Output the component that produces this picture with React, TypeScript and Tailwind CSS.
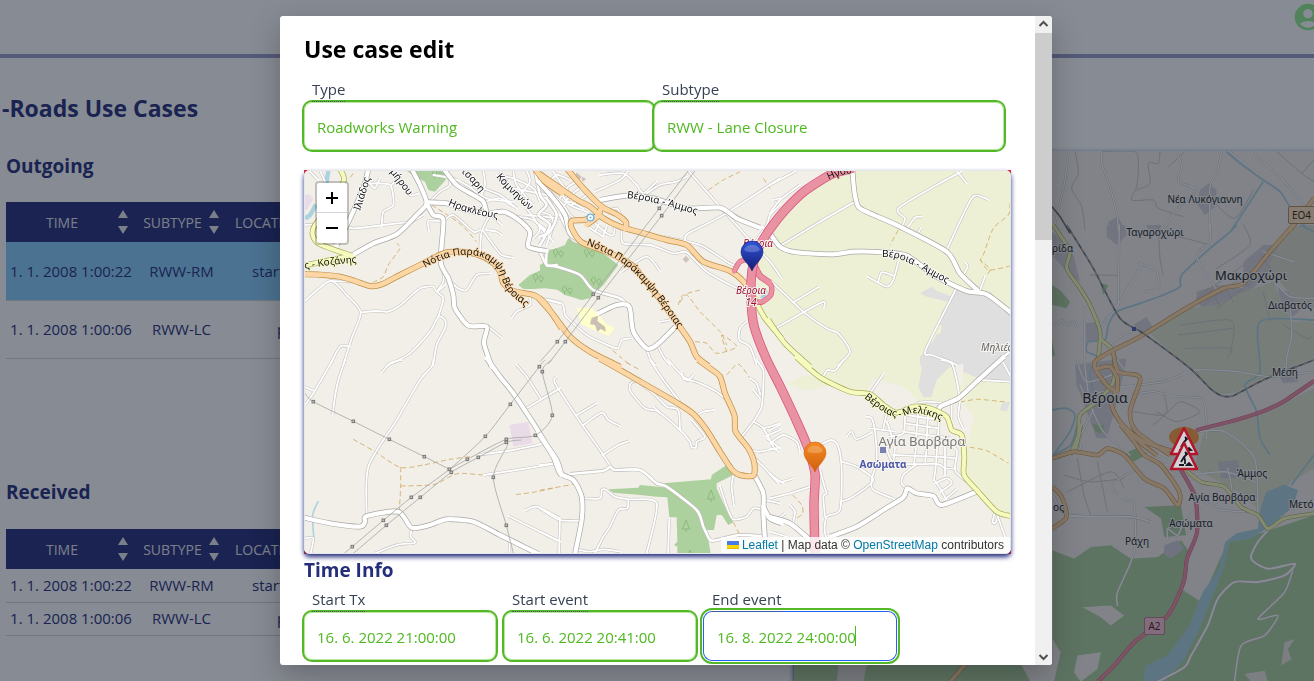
import React from "react";
import { MdAccountCircle } from "react-icons/md";

/* ---------- map drawing ---------- */

type Tile = "P" | "A" | "B" | "C" | "D" | "E" | "F" | "G" | "H" | "I";
type Kind =
  | "minor"
  | "street"
  | "tertiary"
  | "secondary"
  | "primary"
  | "ramp"
  | "motorway"
  | "thin";
type Line = [Tile, Kind, string];
type Area = [Tile, string, string];

const tileTransform: Record<Tile, string> = {
  P: "translate(0 0)",
  A: "translate(300 165) scale(0.33333)",
  B: "translate(540 165) scale(0.33333)",
  C: "translate(770 165) scale(0.33333)",
  D: "translate(300 360) scale(0.33333)",
  E: "translate(540 360) scale(0.33333)",
  F: "translate(770 360) scale(0.33333)",
  G: "translate(1030 0) scale(0.33333)",
  H: "translate(1030 225) scale(0.33333)",
  I: "translate(790 425) scale(0.33419)",
};

const kinds: Record<Kind, { casing: string; fill: string; outer: number; inner: number }> = {
  thin: { casing: "#c4c2c0", fill: "#c4c2c0", outer: 0.9, inner: 0.5 },
  minor: { casing: "#c6c4c2", fill: "#ffffff", outer: 3, inner: 1.8 },
  street: { casing: "#bdbbb9", fill: "#ffffff", outer: 3.8, inner: 2.6 },
  tertiary: { casing: "#a9a8a6", fill: "#ffffff", outer: 5.6, inner: 4.2 },
  secondary: { casing: "#a3ab50", fill: "#f7fabf", outer: 5.6, inner: 4.2 },
  primary: { casing: "#bf8f45", fill: "#fcd6a4", outer: 6, inner: 4.6 },
  ramp: { casing: "#dc5480", fill: "#e892a2", outer: 5.4, inner: 4.2 },
  motorway: { casing: "#dc5480", fill: "#e892a2", outer: 9.4, inner: 7.8 },
};

const order: Kind[] = ["thin", "minor", "street", "tertiary", "secondary", "primary", "ramp", "motorway"];

function smooth(points: string): string {
  const p = points
    .trim()
    .split(/\s+/)
    .map((s) => s.split(",").map(Number));
  let d = `M${p[0][0]} ${p[0][1]}`;
  for (let i = 0; i < p.length - 1; i++) {
    const a = p[Math.max(i - 1, 0)];
    const b = p[i];
    const c = p[i + 1];
    const e = p[Math.min(i + 2, p.length - 1)];
    const k = 8;
    d += `C${b[0] + (c[0] - a[0]) / k} ${b[1] + (c[1] - a[1]) / k} ${c[0] - (e[0] - b[0]) / k} ${
      c[1] - (e[1] - b[1]) / k
    } ${c[0]} ${c[1]}`;
  }
  return d;
}

function Areas({ items }: { items: Area[] }) {
  return (
    <g>
      {items.map(([t, color, pts], i) => (
        <polygon key={i} transform={tileTransform[t]} fill={color} points={pts} />
      ))}
    </g>
  );
}

function Roads({ items, scale = 1 }: { items: Line[]; scale?: number }) {
  const pass = (kind: Kind, casing: boolean) =>
    items
      .filter((l) => l[1] === kind)
      .map(([t, k, pts], i) => (
        <path
          key={kind + casing + i}
          d={smooth(pts)}
          transform={tileTransform[t]}
          fill="none"
          stroke={casing ? kinds[k].casing : kinds[k].fill}
          strokeWidth={(casing ? kinds[k].outer : kinds[k].inner) * scale}
          strokeLinecap={casing ? "butt" : "round"}
          strokeLinejoin="round"
          vectorEffect="non-scaling-stroke"
        />
      ));
  return (
    <g>
      {order.map((k) => (
        <g key={k}>
          {pass(k, true)}
          {pass(k, false)}
        </g>
      ))}
    </g>
  );
}

function Strokes({
  items,
  color,
  width,
  dash,
}: {
  items: [Tile, string][];
  color: string;
  width: number;
  dash?: string;
}) {
  return (
    <g fill="none" stroke={color} strokeWidth={width} strokeDasharray={dash} strokeLinejoin="round">
      {items.map(([t, pts], i) => (
        <path key={i} d={smooth(pts)} transform={tileTransform[t]} vectorEffect="non-scaling-stroke" />
      ))}
    </g>
  );
}

const WOOD = "#add19e";
const FARM = "#eef0d5";
const TOWN = "#e0dfdf";
const WATER = "#aad3df";

const areas: Area[] = [
  ["B", FARM, "655,300 685,190 720,150 720,520 650,430"],
  ["C", FARM, "0,215 80,95 165,17 720,17 720,600 130,600 75,545 0,450"],
  ["F", FARM, "75,-20 720,-20 720,465 680,450 620,390 585,340 590,250 605,170 575,125 440,128 400,110 290,95 250,90 200,70 150,60"],
  ["F", FARM, "50,70 110,45 190,75 110,92"],
  ["F", "#f2efe9", "290,95 310,55 400,80 450,128 575,125 612,170 590,260 588,345 400,330 300,110"],
  ["C", TOWN, "515,440 560,370 620,385 660,380 720,445 720,600 450,600 450,575 465,560 495,520"],
  ["C", TOWN, "450,385 485,365 500,378 560,400 540,412 500,402 470,395"],
  ["C", FARM, "500,480 515,480 512,505 495,510"],
  ["C", FARM, "545,600 560,588 590,588 605,600"],
  ["F", TOWN, "450,-10 720,-10 720,62 640,62 590,40 540,20 500,60 485,110 460,112 445,80 455,30"],
  ["F", TOWN, "695,130 720,125 710,155 690,150"],
  ["F", "#f2efe9", "550,22 580,10 578,80 560,60"],
  ["A", WOOD, "320,17 437,17 437,45 405,80 385,75 375,50 345,35"],
  ["A", WOOD, "655,360 690,330 735,310 742,255 780,250 780,375 735,370 700,372 670,372"],
  ["B", WOOD, "20,260 50,250 75,240 85,220 130,240 160,242 235,300 190,360 150,400 125,405 75,390 35,362 0,355 0,300 15,290"],
  ["E", WOOD, "205,388 295,383 300,375 370,382 370,370 513,358 515,345 560,315 580,345 530,370 530,385 550,430 580,487 565,495 545,465 530,465 522,510 500,510 512,580 412,580 412,560 402,555 412,545 410,472 388,472 382,412 350,410 300,405 220,398"],
  ["A", "#eadbe8", "15,90 28,88 40,103 20,135 15,130"],
  ["D", "#eadbe8", "628,195 685,185 697,250 640,260"],
  ["B", "#ffffcc", "110,430 155,428 200,478 225,490 205,512 150,490 125,478"],
  ["B", "#ccbfb6", "155,458 175,452 172,468 195,485 198,500 182,492 172,500 165,480 150,478"],
  ["B", "#cfc4bb", "438,272 448,283 438,294 428,283"],
  ["B", "#cfc4bb", "110,22 125,35 118,45 105,32"],
  ["B", "#cfc4bb", "128,35 138,42 130,50 124,42"],
  ["B", WATER, "660,400 672,370 684,378 675,400"],
];

const rivers: [Tile, string][] = [
  ["A", "85,17 80,55 90,70"],
  ["A", "48,118 30,150 15,160"],
];

const tracks: [Tile, string][] = [
  ["A", "160,25 145,45"],
  ["A", "218,352 250,335 265,300 300,250 290,235"],
  ["A", "395,120 450,155 490,185 530,230"],
  ["A", "455,150 530,205"],
  ["D", "160,238 225,275 300,322 370,315 450,298 510,290"],
  ["D", "302,322 302,380 298,450"],
  ["D", "302,378 400,374 450,350 480,340 550,345"],
  ["D", "648,404 710,395 770,382"],
  ["E", "0,391 50,382 100,373"],
  ["B", "505,75 550,45 600,20"],
  ["B", "670,40 690,70"],
  ["B", "480,375 430,390 415,420 440,390 480,440 540,500 560,540"],
  ["B", "465,530 500,535 530,565 590,545 545,510 560,560"],
  ["B", "200,540 240,575 270,600"],
  ["E", "560,45 595,12 630,55"],
  ["E", "260,8 300,30"],
  ["E", "580,487 600,525"],
  ["C", "385,195 360,240"],
  ["C", "720,115 715,150 670,190 640,270 632,285 660,312 650,330"],
  ["C", "630,282 655,315 720,303"],
  ["F", "570,126 620,118 670,122 715,127"],
  ["F", "600,262 650,272 715,310"],
  ["F", "68,405 95,435 98,460 80,475"],
];

const powers: [Tile, string][] = [
  ["D", "15,100 40,125 160,184 268,238 373,290 448,328 454,337"],
  ["D", "133,580 157,560 250,481 334,412 448,328 556,229 631,133 718,20 735,0"],
  ["D", "160,580 259,496 361,412 454,337 535,292 619,247 665,240"],
  ["D", "448,328 502,298 619,238 706,226 757,166 727,35 755,0"],
  ["D", "619,250 622,257 580,352 619,496 640,580"],
  ["B", "0,590 52,530 160,388 358,130 445,17"],
  ["B", "25,597 76,530 175,398 365,152 465,17"],
];

const pylons: [Tile, number, number][] = [
  ["D", 40, 125], ["D", 160, 184], ["D", 268, 238], ["D", 373, 290], ["D", 448, 328], ["D", 454, 337],
  ["D", 157, 560], ["D", 250, 481], ["D", 259, 496], ["D", 334, 412], ["D", 361, 412], ["D", 502, 298],
  ["D", 535, 292], ["D", 556, 229], ["D", 631, 133], ["D", 718, 20], ["D", 727, 35], ["D", 757, 166],
  ["D", 706, 226], ["D", 619, 238], ["D", 619, 247], ["D", 580, 352], ["D", 619, 496],
  ["B", 52, 530], ["B", 76, 530], ["B", 160, 388], ["B", 175, 398], ["B", 358, 130], ["B", 365, 152],
];

const roads: Line[] = [
  // motorway and its junction
  ["P", "motorway", "853,168 832,174 806,190 786,209 770,229 758,249 752,271 751,298 754,326 766,358 780,386 797,422 808,448 815,474 814,505 815,556"],
  ["B", "ramp", "640,412 668,410 692,390 693,360 660,335 645,310"],
  ["B", "ramp", "582,320 600,290 635,285 660,330 690,352"],
  // main roads
  ["A", "primary", "12,328 60,329 120,335 165,348 210,363 245,358 300,330 370,295 430,265 480,260 530,268 575,290 600,320 610,355 640,378 700,390 735,415 785,490"],
  ["B", "primary", "-5,398 40,450 90,515 150,560 240,605"],
  ["E", "primary", "180,-4 280,53 410,128 460,162 500,210 540,275 575,328 600,345 640,347 643,310 625,265 587,215 583,165 555,100 540,50 510,25 475,0"],
  ["B", "primary", "-5,25 50,62 110,104 150,125 190,160 240,185 300,202 380,225 440,240 490,290 570,318 615,355 645,405"],
  ["B", "primary", "80,10 130,70 185,125 230,148 258,172 256,192"],
  ["B", "primary", "185,125 172,155 140,180"],
  ["B", "primary", "172,155 130,165 95,168 95,190 125,232 200,260 275,300 310,340 350,390 410,472 450,530 470,575 505,603"],
  ["A", "primary", "705,12 735,50 785,85"],
  ["B", "secondary", "645,405 675,460 725,520"],
  ["C", "secondary", "-5,465 45,535 120,605"],
  ["F", "secondary", "80,-8 150,52 240,95 300,102 340,135 380,158 430,140 480,145 530,170 545,210 575,225 583,290 582,345 620,390 680,455 722,468"],
  ["A", "secondary", "120,12 132,45 100,110 45,180 38,210 60,238 155,272"],
  ["A", "secondary", "155,272 90,285 12,302"],
  // connecting roads
  ["A", "tertiary", "335,12 360,60 380,115 350,150 290,208 220,235 155,272"],
  ["A", "tertiary", "380,112 440,115 500,135 560,145 610,140 650,160 690,200 685,245 740,258"],
  ["A", "tertiary", "380,115 400,150 430,165 422,290 445,340 460,390 465,430 505,482 560,485 552,535 575,605"],
  ["A", "tertiary", "435,17 470,60 520,90 550,110 560,145"],
  ["A", "tertiary", "205,12 190,70 150,160 110,240"],
  ["D", "tertiary", "560,-5 600,50 640,100 700,190 740,255 770,300 785,345"],
  ["E", "tertiary", "-5,220 40,290 60,340 100,360 125,410 125,480 105,582"],
  ["D", "tertiary", "12,473 90,490 180,500 195,485 200,468 295,455 335,503 390,495 440,478 520,485 600,525 715,582"],
  ["C", "tertiary", "247,12 253,80 265,125 300,145 390,185 530,260 570,325 625,378"],
  ["C", "tertiary", "0,205 30,245 80,262 190,268 250,260 340,262 410,272 500,335 590,378 650,388 725,445"],
  ["F", "tertiary", "700,-8 620,65 565,115 510,140 510,165"],
  ["F", "tertiary", "180,530 260,500 340,450 400,412 412,385 440,400 490,408 515,435 620,395"],
  ["B", "tertiary", "180,105 262,92 340,100 440,130 540,128 590,160 660,188"],
  ["E", "tertiary", "643,345 670,400 670,460 675,540"],
  ["E", "tertiary", "670,440 690,475 725,490"],
  ["F", "tertiary", "-5,470 60,490 120,540"],
  ["B", "tertiary", "175,445 230,420 268,425 280,500 320,550 350,540 412,480"],
  ["B", "tertiary", "-5,50 40,100 75,150 90,205 130,235"],
  // streets
  ["A", "street", "740,258 740,300 770,300"],
  ["B", "street", "0,260 20,300 50,305 120,330 160,375 240,400 270,430"],
  ["B", "street", "130,235 100,225 80,190 60,150"],
  ["A", "street", "705,17 720,90 740,120 715,150 750,180 720,240"],
  ["A", "street", "740,100 770,150 750,200 720,215"],
  ["A", "minor", "15,180 100,175 160,190 250,180 330,170 370,150"],
  ["A", "minor", "210,55 270,60 280,120 250,140 245,185"],
  ["A", "minor", "210,55 225,70 240,40"],
  ["A", "minor", "275,60 300,40 330,90 355,85"],
  ["A", "minor", "60,17 75,50"],
  ["A", "minor", "30,20 55,45"],
  ["A", "minor", "12,410 90,348 140,390 182,442 155,520 130,600"],
  ["A", "minor", "90,348 150,350"],
  ["A", "minor", "182,442 230,438 265,440 305,418 335,390 365,368 400,365 410,380 435,360"],
  ["A", "minor", "430,300 430,350 412,380 430,400 415,455"],
  ["A", "minor", "265,600 330,565 390,500 415,455 435,465 435,490 410,540 400,600"],
  ["A", "minor", "445,345 475,370 500,375 530,330 570,325"],
  ["A", "minor", "690,398 690,420 650,440 635,460"],
  ["A", "minor", "722,400 780,415"],
  ["A", "minor", "565,485 605,518"],
  ["A", "minor", "150,545 120,545 90,600"],
  ["A", "minor", "430,170 385,168 388,200"],
  ["A", "minor", "430,170 460,150 520,200 540,195"],
  ["A", "minor", "540,260 545,200 570,150"],
  ["A", "minor", "548,195 580,240 605,270 638,278"],
  ["A", "minor", "560,195 590,200 605,210"],
  ["A", "minor", "570,145 605,180"],
  ["A", "minor", "400,30 460,40 500,60 560,100 640,110"],
  ["A", "minor", "440,20 450,60 420,80 390,110"],
  ["A", "minor", "500,17 530,60 600,90 650,130"],
  ["A", "minor", "540,100 555,60 550,17"],
  ["A", "minor", "560,110 600,100 640,125"],
  ["A", "minor", "590,30 640,40 700,70 720,110"],
  ["A", "minor", "640,17 650,60 700,120"],
  ["A", "minor", "680,17 690,50 660,90"],
  ["A", "minor", "600,17 620,50"],
  ["A", "minor", "640,70 740,90"],
  ["A", "minor", "680,130 720,190 700,220"],
  ["A", "minor", "620,150 700,165 740,210"],
  ["A", "minor", "720,70 780,110"],
  ["A", "minor", "680,150 780,160"],
  ["A", "minor", "720,180 760,230"],
  // town blocks
  ["B", "minor", "0,90 30,110 50,150"],
  ["B", "minor", "40,20 60,50 90,85 150,130"],
  ["B", "minor", "20,60 50,30 90,45"],
  ["B", "minor", "60,100 85,65 110,50"],
  ["B", "minor", "75,110 105,80 130,65"],
  ["B", "minor", "95,120 150,85"],
  ["B", "minor", "35,60 60,80 90,120 140,140"],
  ["B", "minor", "30,80 70,120 90,150 110,165"],
  ["B", "minor", "60,140 85,110 130,130"],
  ["B", "minor", "0,140 30,150 40,180 20,240"],
  ["B", "minor", "0,180 20,200 0,240"],
  ["B", "minor", "160,170 200,205 220,210 225,180"],
  ["B", "minor", "150,190 190,215"],
  ["B", "minor", "175,180 165,200"],
  ["B", "minor", "200,185 190,210"],
  ["B", "minor", "210,135 230,130 240,145"],
  ["B", "minor", "0,17 30,50"],
  ["B", "minor", "165,80 240,45 265,17"],
  ["B", "minor", "180,30 250,25 290,60 310,85 350,50"],
  ["B", "minor", "245,195 250,235 330,240 400,265 440,262 500,320 600,375"],
  ["B", "minor", "320,85 360,60 410,50 440,35"],
  ["B", "minor", "445,17 540,125 620,215 690,290 725,340"],
  ["B", "minor", "435,225 445,205 550,150 720,40"],
  ["B", "minor", "370,215 480,240 560,290 590,305"],
  ["B", "minor", "550,130 600,160"],
  ["B", "minor", "640,240 680,180 690,150 720,120"],
  ["B", "street", "670,188 720,250"],
  ["B", "minor", "245,320 320,275 360,318"],
  ["B", "minor", "360,470 390,465 405,450"],
  ["B", "minor", "0,400 65,415 75,450 100,475 140,510 180,530 232,550 245,525 275,520"],
  ["B", "minor", "320,552 330,580 345,600"],
  ["B", "minor", "355,545 370,575 390,600"],
  ["B", "minor", "620,470 600,490 598,525 630,545 650,600"],
  ["E", "minor", "45,70 42,58 50,50"],
  ["E", "minor", "45,70 110,170 190,285 215,325"],
  ["E", "minor", "0,120 60,85"],
  ["E", "minor", "110,165 170,130"],
  ["E", "minor", "130,195 185,158 205,180 240,198"],
  ["E", "minor", "188,285 235,255 268,243"],
  ["E", "street", "90,342 190,332 210,320 225,330 300,330 350,370 380,380 470,450 490,500 510,540 530,540 600,525 675,530"],
  ["E", "minor", "330,0 370,60 420,125"],
  ["E", "minor", "385,0 430,50 480,70 530,95 560,120"],
  ["E", "minor", "425,35 430,55 445,60 462,42"],
  ["E", "minor", "290,62 272,70 272,95 315,145 355,155 420,210 450,245 455,262 468,262 470,245 495,230 455,180"],
  ["E", "minor", "290,62 340,100 380,140 415,150 420,210"],
  ["E", "minor", "470,165 490,155 522,150"],
  ["E", "minor", "340,140 360,158"],
  ["E", "minor", "650,0 670,30 670,70 665,140 640,185 605,230"],
  ["E", "minor", "640,90 660,115"],
  ["E", "minor", "630,55 650,70 660,100"],
  ["E", "minor", "640,185 670,205 700,260 715,275"],
  ["E", "minor", "670,205 690,200 720,190"],
  ["E", "minor", "675,230 720,210"],
  ["E", "minor", "680,235 720,265"],
  ["E", "minor", "635,272 660,275 720,262"],
  ["E", "minor", "645,295 670,320 715,370"],
  ["E", "minor", "580,345 575,380 582,435"],
  ["E", "minor", "540,378 560,440 580,478 620,470 640,445 670,450"],
  ["E", "minor", "125,415 180,415 185,390 200,390 225,410 265,418 350,430 320,580"],
  ["E", "minor", "265,420 262,445 235,450 210,500 190,530 165,580"],
  ["E", "minor", "0,445 60,480 120,482"],
  ["E", "minor", "60,480 57,582"],
  ["E", "minor", "0,515 60,545"],
  ["E", "minor", "110,568 150,575 190,568 240,575"],
  ["E", "minor", "388,475 384,582"],
  ["E", "minor", "0,315 50,310"],
  ["E", "minor", "0,252 12,250"],
  ["E", "minor", "675,420 720,430"],
  ["D", "minor", "98,0 40,100 15,135"],
  ["D", "minor", "12,80 40,92"],
  ["D", "minor", "135,0 115,60 105,110 98,165"],
  ["D", "minor", "305,0 270,10 245,38"],
  ["D", "minor", "400,0 395,20 360,60 290,180 205,320 200,468"],
  ["D", "minor", "650,15 680,50 722,115"],
  ["D", "minor", "675,148 780,85"],
  ["D", "minor", "535,285 640,270 730,252"],
  ["D", "minor", "552,345 650,330 770,310"],
  ["D", "minor", "675,452 710,440 780,475"],
  ["D", "minor", "625,468 780,545"],
  ["D", "minor", "335,505 332,530 345,548 290,555 225,580"],
  ["D", "minor", "15,535 40,535 32,580"],
  ["D", "minor", "630,545 628,580"],
  // farmland side
  ["C", "minor", "0,60 80,17"],
  ["C", "minor", "0,145 30,105 90,60"],
  ["C", "minor", "10,105 30,100"],
  ["C", "minor", "255,110 150,170 35,240"],
  ["C", "minor", "580,17 500,60 385,130 405,160 398,180"],
  ["C", "minor", "560,17 590,55"],
  ["C", "minor", "455,155 435,158 412,188"],
  ["C", "minor", "452,190 442,208"],
  ["C", "minor", "530,255 605,100 640,98 655,105"],
  ["C", "minor", "580,330 593,305 585,292"],
  ["C", "minor", "630,375 645,335"],
  ["C", "minor", "385,290 370,345 350,365 292,335"],
  ["C", "minor", "325,350 335,322 370,332"],
  ["C", "minor", "0,345 100,440 170,490 205,505 240,560 205,600"],
  ["C", "minor", "70,412 145,367"],
  ["C", "minor", "20,488 155,412 162,428"],
  ["C", "minor", "558,372 467,555 485,570 540,590 560,600"],
  ["C", "street", "670,600 720,560"],
  ["F", "minor", "160,50 172,30 195,32 220,0"],
  ["F", "minor", "300,100 340,42"],
  ["F", "minor", "515,0 545,10 560,60 570,120"],
  ["F", "minor", "630,60 720,65"],
  ["F", "minor", "695,0 720,45"],
  ["F", "minor", "570,125 565,170 580,205"],
  ["F", "minor", "545,135 545,180"],
  ["F", "minor", "440,130 470,125 510,128"],
  ["F", "minor", "405,170 400,220 355,230"],
  ["F", "minor", "445,150 438,235"],
  ["F", "minor", "475,150 470,235"],
  ["F", "minor", "508,165 498,310 492,360"],
  ["F", "minor", "410,165 510,180"],
  ["F", "minor", "405,190 505,205"],
  ["F", "minor", "400,215 540,235"],
  ["F", "minor", "375,265 370,310"],
  ["F", "minor", "438,265 432,310"],
  ["F", "minor", "470,265 465,305"],
  ["F", "minor", "370,285 500,290 560,295"],
  ["F", "minor", "350,265 375,310 500,312 525,325 555,325"],
  ["F", "minor", "510,240 560,270 555,330 590,365"],
  ["F", "minor", "525,260 525,345"],
  ["F", "minor", "440,312 400,345 395,370 410,385"],
  ["F", "minor", "492,360 510,385 530,420"],
  ["F", "minor", "495,370 530,355 545,370 512,395"],
  ["F", "minor", "560,388 525,418"],
  ["F", "minor", "288,170 305,175 315,215 320,300 305,360 310,390 380,420"],
  ["F", "minor", "300,205 340,210 375,215"],
  ["F", "minor", "340,205 350,160"],
  ["F", "minor", "230,230 245,215 260,238 305,218"],
  ["F", "minor", "350,185 365,230 355,260"],
  ["F", "minor", "150,255 185,240 205,260 215,330 210,450 170,470 165,520 185,560"],
  ["F", "minor", "215,305 260,320 310,360 250,410 212,425"],
  ["F", "minor", "150,330 165,385 170,400 160,410 165,470"],
  ["F", "minor", "0,210 30,195"],
  ["F", "minor", "0,250 40,225 80,245 90,275"],
  ["F", "minor", "0,265 20,270"],
  ["F", "minor", "0,340 30,365 70,355"],
  ["F", "minor", "10,350 40,370"],
  ["F", "minor", "0,415 60,400 120,380"],
  ["F", "minor", "60,435 75,455 70,485"],
  ["F", "minor", "20,480 45,460"],
  ["F", "minor", "0,515 50,530"],
  ["F", "minor", "675,455 668,485 675,490 680,480"],
  ["F", "minor", "680,460 705,530"],
];

const farAreas: Area[] = [
  ["G", "#d5d3d6", "510,570 535,550 560,570 555,620 525,645 500,610"],
  ["G", "#d5d3d6", "235,665 265,650 285,690 235,690"],
  ["H", "#d5d3d6", "230,0 285,0 290,30 260,60 230,35"],
  ["H", "#d5d3d6", "350,0 395,0 385,30 355,20"],
  ["H", "#d5d3d6", "66,20 90,40 130,90 150,170 110,140 66,90"],
  ["H", "#d5d3d6", "500,200 560,180 640,190 640,110 700,60 750,60 750,130 640,210 530,255 500,235"],
  ["H", "#d5d3d6", "310,300 350,275 370,310 340,335"],
  ["H", "#d5d3d6", "745,190 800,210 820,245 790,275 750,240"],
  ["H", "#d5d3d6", "740,440 800,420 805,470 760,475"],
  ["H", "#d5d3d6", "165,295 205,290 205,350 170,350"],
  ["H", "#d5d3d6", "135,420 195,410 290,400 265,520 230,640 200,640 140,480"],
  ["H", "#dcdcc8", "780,0 852,0 852,250 800,230 740,160 700,150"],
  ["H", "#dfe4cb", "350,318 470,250 560,240 630,205 730,170 780,280 780,400 760,440 700,460 610,505 560,508 480,430"],
  ["H", "#dfe4cb", "690,290 852,290 852,400 700,455"],
  ["H", "#dfe4cb", "852,490 852,690 540,690 520,620 690,570 770,530"],
  ["I", "#dfe4cb", "1235,30 1568,0 1568,130 1500,170 1420,270 1340,200 1210,130"],
  ["H", WOOD, "66,180 90,195 120,230 110,250 66,240"],
  ["H", WOOD, "210,175 235,180 220,210"],
  ["H", WOOD, "185,595 205,600 225,620 205,625"],
  ["H", WOOD, "66,345 75,390 66,395"],
  ["I", WOOD, "1000,85 1040,68 1070,85 1030,110"],
  ["I", WOOD, "905,0 940,0 935,25 915,20"],
  ["I", WOOD, "1060,245 1170,240 1185,330 1120,335 1110,280"],
  ["I", WOOD, "785,375 850,400 900,365 960,360 1020,400 1100,395 1170,345 1195,380 1170,490 1230,530 1260,460 1310,350 1420,320 1568,270 1568,768 785,768"],
  ["I", WOOD, "12,715 790,715 790,768 12,768"],
  ["I", "#e6e3dd", "145,715 230,715 220,768 140,768"],
  ["I", "#f2efe9", "690,715 790,715 790,768 720,768"],
  ["I", "#f2efe9", "875,545 960,540 1000,570 960,600 930,575"],
  ["I", "#f2efe9", "785,640 810,680 790,768 785,768"],
  ["I", "#f2efe9", "860,690 930,680 920,730 870,768 850,740"],
  ["I", "#cfcfd6", "1120,360 1160,345 1180,370 1140,400 1118,385"],
  ["I", "#cfcfd6", "1280,110 1340,105 1350,160 1290,160"],
  ["I", "#e8e4dd", "1480,650 1510,640 1490,670 1500,700 1470,720"],
  ["I", "#e8e4dd", "1360,745 1420,735 1430,768 1380,768"],
  ["I", WATER, "1425,200 1480,178 1520,195 1505,245 1440,300 1380,340 1315,350 1300,420 1262,520 1220,620 1180,700 1120,768 1055,768 1065,720 1130,690 1195,600 1235,500 1285,430 1302,350 1335,325 1400,310 1405,260"],
];

const farRivers: [Tile, string][] = [
  ["G", "590,455 630,490 700,540 750,575 780,620 830,685"],
  ["G", "700,545 670,590 605,690"],
  ["H", "620,0 590,30 540,70 455,150 450,185 400,210 330,235 260,260 235,300 225,345 175,350 170,380 200,395 180,440 190,500"],
  ["H", "852,285 690,290 690,440 645,480 680,560 690,640 720,690"],
  ["H", "66,555 110,550 135,570 120,620 70,690"],
  ["H", "810,0 852,20"],
  ["I", "785,90 840,60 860,0"],
  ["I", "1568,90 1530,140 1500,180"],
];

const farRoads: Line[] = [
  ["G", "minor", "115,455 105,540 85,630 70,690"],
  ["G", "minor", "215,455 215,490 240,560 262,650 265,690"],
  ["G", "minor", "440,455 455,500 445,540 480,560 500,570 440,630 400,690"],
  ["G", "minor", "575,455 560,520 540,560 540,690"],
  ["G", "minor", "600,455 680,520"],
  ["G", "minor", "680,455 680,470 750,530 800,590 825,620"],
  ["G", "thin", "135,455 145,520 125,565 155,620 165,690"],
  ["G", "thin", "215,455 315,455 325,500 320,560 305,600 370,600 385,625 460,650"],
  ["G", "thin", "390,455 385,490 355,490 360,550 320,570"],
  ["G", "thin", "465,455 415,500"],
  ["G", "thin", "740,455 815,520 852,545"],
  ["G", "thin", "815,520 852,480"],
  ["G", "thin", "555,610 615,655 670,570"],
  ["H", "minor", "268,0 265,240"],
  ["H", "minor", "260,245 330,130 330,115 380,140 385,190 340,200"],
  ["H", "minor", "540,0 540,50 500,95 560,195"],
  ["H", "minor", "165,240 165,420 180,540"],
  ["H", "minor", "66,290 80,300 95,285 110,300 130,290 140,310"],
  ["H", "minor", "215,310 230,280 265,250"],
  ["H", "minor", "160,520 250,490 400,470 500,435 620,440 720,455 852,440"],
  ["H", "minor", "300,510 370,500 440,515 520,525 530,640"],
  ["H", "minor", "780,240 785,330 770,400 770,440"],
  ["H", "minor", "730,165 780,215 852,220"],
  ["H", "minor", "790,110 700,80"],
  ["H", "minor", "150,480 180,540 220,620 300,690"],
  ["H", "minor", "190,555 150,640 160,690"],
  ["H", "minor", "140,400 170,470 270,440"],
  ["H", "minor", "280,430 240,360 320,310"],
  ["H", "thin", "180,150 210,150 270,152"],
  ["H", "thin", "385,0 390,100 400,150"],
  ["H", "thin", "430,30 540,60"],
  ["H", "thin", "450,300 600,285 610,340 600,380"],
  ["H", "thin", "445,330 610,310"],
  ["H", "thin", "465,370 600,370 590,400"],
  ["H", "thin", "640,0 660,60 560,130"],
  ["H", "thin", "310,560 400,570 450,530 510,560 440,590 380,560"],
  ["H", "thin", "400,500 410,560 370,600"],
  ["H", "thin", "700,200 720,290"],
  ["H", "thin", "760,300 830,340 852,330"],
  ["H", "thin", "500,220 640,120"],
  ["H", "thin", "520,240 660,140"],
  ["H", "thin", "560,250 720,130"],
  ["H", "thin", "540,190 570,245"],
  ["H", "thin", "580,180 610,230"],
  ["H", "thin", "640,150 660,190"],
  ["H", "thin", "690,90 730,140"],
  ["I", "street", "790,215 830,270 1020,275 1080,290"],
  ["I", "minor", "1020,0 1060,60 1130,110"],
  ["I", "minor", "1220,20 1300,20 1390,100 1400,260"],
  ["I", "minor", "1100,110 1160,150 1300,140 1390,170"],
  ["I", "minor", "1040,130 960,180 1000,220 1030,240 1030,380 980,500 980,540"],
  ["I", "minor", "1130,340 1130,310 1160,330 1180,290 1230,240"],
  ["I", "minor", "1200,190 1270,250 1370,260"],
  ["I", "minor", "1310,130 1320,200 1260,240"],
  ["I", "thin", "820,150 900,170 1000,160"],
  ["I", "thin", "860,100 880,210 900,270"],
  ["I", "thin", "920,110 950,260"],
  ["I", "thin", "830,200 960,140 1000,190"],
  ["I", "thin", "970,600 1060,610 1080,560"],
  ["I", "street", "1440,305 1400,350 1380,400 1430,430 1510,415 1480,450 1400,470 1330,470 1280,520 1250,600 1200,690 1180,725 1100,768"],
  ["I", "minor", "1510,415 1480,500 1400,580 1460,570 1420,630 1350,660 1330,768"],
  ["H", "secondary", "70,0 90,30 120,80 110,130 150,190 180,240 210,320 205,400"],
  ["H", "secondary", "215,345 250,380 250,470 200,530 150,570 145,630 120,690"],
  ["I", "secondary", "870,0 860,50 850,75 800,95"],
  ["I", "secondary", "1180,130 1230,170 1300,185 1350,245 1400,270 1430,310 1480,280 1568,265"],
  ["H", "primary", "790,0 720,80 640,175 580,190 460,255 330,335 195,410 230,480 255,500 245,540 270,590 340,660 380,690"],
  ["H", "primary", "250,385 265,440 320,450 330,470 300,560 320,620 420,690"],
  ["H", "primary", "205,430 240,425 262,460 262,500"],
  ["I", "primary", "785,100 850,80 920,90 950,70 1000,90 1060,160 1120,190 1160,240 1165,200 1110,120 1060,90 1030,50 990,0"],
  ["I", "primary", "990,0 1060,50 1150,80"],
  ["I", "primary", "785,185 810,210 825,250 825,280 785,310"],
  ["I", "primary", "525,715 480,768"],
  ["G", "primary", "852,595 780,690"],
  ["H", "ramp", "852,468 760,530 690,562 600,590 500,615"],
  ["I", "ramp", "1170,135 1212,215 1218,320 1188,400 1178,470 1130,570 1030,650 970,720 920,768"],
];

function Label({
  x,
  y,
  size,
  children,
  fill = "#222222",
  halo = "#f6f4f0",
  anchor = "middle",
  italic = false,
  bold = false,
}: {
  x: number;
  y: number;
  size: number;
  children: string;
  fill?: string;
  halo?: string;
  anchor?: "start" | "middle" | "end";
  italic?: boolean;
  bold?: boolean;
}) {
  return (
    <text
      x={x}
      y={y}
      fontSize={size}
      fill={fill}
      stroke={halo}
      strokeWidth={2}
      paintOrder="stroke"
      textAnchor={anchor}
      fontStyle={italic ? "italic" : "normal"}
      fontWeight={bold ? 700 : 400}
    >
      {children}
    </text>
  );
}

const roadNames: { id: string; d: string; text: string; size: number; halo: string }[] = [
  { id: "n1", d: "M360 211 Q366 193 372 172", text: "Ιλιάδος", size: 10, halo: "#ffffff" },
  { id: "n2", d: "M390 172 Q399 183 412 202", text: "μήρου", size: 10, halo: "#ffffff" },
  { id: "n3", d: "M461 172 Q472 182 486 200", text: "τσαρη", size: 10, halo: "#ffffff" },
  { id: "n4", d: "M496 177 Q511 195 534 214", text: "Κομνηνών", size: 10, halo: "#ffffff" },
  { id: "n5", d: "M448 205 Q464 213 500 219", text: "Ηρακλέους", size: 10, halo: "#ffffff" },
  { id: "n6", d: "M305 269 Q330 264 366 262", text: "ς - Κοζάνης", size: 10, halo: "#f7fabf" },
  { id: "n7", d: "M425 268 C460 247 490 253 500 273 C504 285 506 293 520 302 L530 312", text: "Νότια Παράκαμψη Βέροιας", size: 10, halo: "#fcd6a4" },
  { id: "n8", d: "M586 245 C630 260 645 280 683 336", text: "Νότια Παράκαμψη Βέροιας", size: 10, halo: "#fcd6a4" },
  { id: "n9", d: "M627 198 Q660 202 704 217", text: "Βέροια - Άμμος", size: 10, halo: "#ffffff" },
  { id: "n10", d: "M882 257 C905 256 915 268 956 288", text: "Βέροια - Άμμος", size: 10, halo: "#ffffff" },
  { id: "n11", d: "M864 398 C885 414 895 421 907 415 Q918 409 946 423", text: "Βέροιας - Μελίκης", size: 10, halo: "#f7fabf" },
  { id: "n12", d: "M829 180 Q842 173 862 172", text: "Ηγου", size: 10, halo: "#e892a2" },
];

function Drop({ x, y, id, top, base }: { x: number; y: number; id: string; top: string; base: string }) {
  return (
    <g transform={`translate(${x} ${y})`}>
      <defs>
        <linearGradient id={id} x1="0" y1="0" x2="0" y2="1">
          <stop offset="0" stopColor={top} />
          <stop offset="1" stopColor={base} />
        </linearGradient>
      </defs>
      <path
        d="M0 0C-2-6-11-12-11-19A11 11 0 0 1 11-19C11-12 2-6 0 0Z"
        fill={`url(#${id})`}
        stroke={base}
        strokeWidth="0.6"
      />
      <path d="M-8-21A8.5 8 0 0 1 8-21C4-18-4-18-8-21Z" fill="#ffffff" opacity="0.22" />
    </g>
  );
}

function Tree({ x, y, cone = false }: { x: number; y: number; cone?: boolean }) {
  return (
    <g transform={`translate(${x} ${y})`} fill="none" stroke="#8ab57c" strokeWidth="0.9">
      {cone ? (
        <path d="M0-6L-3.5 3H3.5ZM0 3V6" />
      ) : (
        <path d="M-2.5-4a2 3 0 1 0 .1 0M-2.5 2V4.5M3-2a2 2.5 0 1 0 .1 0M3 3V4.5" />
      )}
    </g>
  );
}

function DetailMap() {
  return (
    <svg
      viewBox="305 171 705 382"
      preserveAspectRatio="xMinYMin slice"
      className="block h-full w-full font-['Noto_Sans',sans-serif]"
      role="img"
      aria-label="Use case location"
    >
      <rect x="304" y="170" width="3000" height="1600" fill="#f2efe9" />
      <Areas items={areas} />
      <Strokes items={rivers} color={WATER} width={4.5} />
      <Strokes items={[["D", "55,423 38,465 42,540"]]} color={WATER} width={1.6} />
      <Strokes items={tracks} color="#d1ad68" width={0.9} dash="5 3" />
      {[[437, 174], [538, 278], [558, 253], [589, 253], [596, 281], [567, 290]].map(([x, y]) => (
        <Tree key={`${x}-${y}`} x={x} y={y} />
      ))}
      {[[711, 496], [686, 526], [690, 556]].map(([x, y]) => (
        <Tree key={`${x}-${y}`} x={x} y={y} cone />
      ))}
      <Roads items={roads} />
      <Strokes items={powers} color="#a5a4a2" width={0.8} />
      {pylons.map(([t, x, y], i) => (
        <rect
          key={i}
          x={x - 4}
          y={y - 4}
          width={8}
          height={8}
          transform={tileTransform[t]}
          fill="#c4c3c1"
          stroke="#6f6e6d"
          strokeWidth={2.6}
        />
      ))}
      <circle cx="590.5" cy="217.5" r="3.4" fill="#fff" stroke="#6db4e6" strokeWidth="1.4" />
      <circle cx="590.5" cy="217.5" r="1" fill="#6db4e6" />
      {roadNames.map((n) => (
        <g key={n.id}>
          <path id={n.id} d={n.d} fill="none" />
          <text
            fontSize={n.size}
            fill="#111111"
            stroke={n.halo}
            strokeWidth={1.6}
            paintOrder="stroke"
            dominantBaseline="auto"
          >
            <textPath href={`#${n.id}`}>{n.text}</textPath>
          </text>
        </g>
      ))}
      <Label x={758} y={247} size={10} fill="#a01030" italic>Βέροια</Label>
      <Label x={751} y={294} size={10} fill="#a01030" italic>Βέροια</Label>
      <Label x={751} y={306} size={10} fill="#a01030" italic>14</Label>
      <Label x={981} y={351} size={10} fill="#666666" anchor="start" italic>Μηλιές</Label>
      <Label x={922} y={446} size={13} fill="#777777">Αγία Βαρβάρα</Label>
      <Label x={883} y={468} size={10} fill="#4a55a8" bold>Ασώματα</Label>
      <rect x="880" y="447" width="6" height="6" fill="#7981b0" />
      <Drop x={752} y={271} id="pin-blue" top="#2f55d8" base="#141c74" />
      <Drop x={815} y={472} id="pin-orange" top="#f58a22" base="#d0600c" />
    </svg>
  );
}

function OverviewMap() {
  return (
    <svg
      viewBox="794 151 520 531"
      preserveAspectRatio="xMinYMin slice"
      className="block h-full w-full font-['Noto_Sans',sans-serif]"
      role="img"
      aria-label="Overview of use cases"
    >
      <rect x="794" y="151" width="3000" height="3000" fill="#f2efe9" />
      <Areas items={farAreas} />
      <Strokes items={farRivers} color={WATER} width={1.8} />
      <Roads items={farRoads} scale={0.75} />
      <Strokes
        items={[
          ["H", "110,0 190,130 270,280 340,325 480,430 540,490 575,512 610,512 700,465 852,405"],
          ["G", "66,620 90,650 120,700"],
        ]}
        color="#6d6d6d"
        width={1.6}
      />
      <Strokes
        items={[["H", "110,0 190,130 270,280 340,325 480,430 540,490 575,512 610,512 700,465 852,405"]]}
        color="#ececec"
        width={0.6}
        dash="5 4"
      />
      <rect x="1132" y="327" width="4" height="4" fill="#5360b0" />
      <Label x={1205} y={203} size={10}>Νέα Λυκόγιαννη</Label>
      <Label x={1155} y={236} size={10}>Ταγαροχώρι</Label>
      <Label x={1052} y={252} size={10} anchor="start">ρίδα</Label>
      <Label x={1251} y={280} size={13}>Μακροχώρι</Label>
      <Label x={1290} y={309} size={10}>Διαβατός</Label>
      <Label x={1285} y={376} size={10}>Μέση</Label>
      <Label x={1105} y={403} size={14}>Βέροια</Label>
      <Label x={1252} y={477} size={10}>Άμμος</Label>
      <Label x={1222} y={501} size={10}>Αγία Βαρβάρα</Label>
      <Label x={1191} y={527} size={10}>Ασώματα</Label>
      <Label x={1137} y={545} size={10}>Ράχη</Label>
      <Label x={1289} y={508} size={10} anchor="start">Μετό</Label>
      <Label x={1064} y={511} size={10} anchor="end">ος</Label>
      <rect x="1144.5" y="617.5" width="20" height="17" rx="1.5" fill="#f4c3d0" stroke="#c0788c" />
      <text x="1154.500" y="630" fontSize="10" textAnchor="middle" fill="#5b1128">A2</text>
      <rect x="1288.500" y="206.500" width="30" height="17" rx="1.500" fill="#fbe3c1" stroke="#b08c56" />
      <text x="1292" y="219" fontSize="10" fill="#3f2800">EO4</text>
      <ellipse cx="1184" cy="437" rx="15" ry="10" fill="#ffa040" />
    </svg>
  );
}

function RoadworksSigns() {
  const sign = (x: number, y: number) => (
    <g transform={`translate(${x} ${y})`}>
      <path d="M0-14L13 12H-13Z" fill="#d2d2d8" stroke="#b3152b" strokeWidth="2.600" strokeLinejoin="round" />
      <path d="M1-5l2 2-3 3 1 3v4M0 0l-3 5M-5 8h5M3 8l2-2 2 2z" stroke="#16181d" strokeWidth="1.800" fill="#16181d" />
    </g>
  );
  return (
    <svg width="30" height="48" viewBox="0 0 30 48" className="block" aria-hidden="true">
      {sign(15, 17)}
      {sign(15, 32)}
    </svg>
  );
}

/* ---------- page behind the dialog ---------- */

function SortButton({ column }: { column: string }) {
  return (
    <button type="button" aria-label={`Sort by ${column}`} className="shrink-0 text-gray-200">
      <svg width="10" height="24" viewBox="0 0 10 24" fill="currentColor" className="block">
        <path d="M5 0L10 8H0ZM5 24L10 16H0Z" />
      </svg>
    </button>
  );
}

function UseCaseTable({ compact }: { compact: boolean }) {
  const rows = [
    { time: "1. 1. 2008 1:00:22", subtype: "RWW-RM", location: "start", pad: "pl-[25px]" },
    { time: "1. 1. 2008 1:00:06", subtype: "RWW-LC", location: "p", pad: "pl-[50px]" },
  ];
  return (
    <table className="w-full table-fixed border-collapse text-[15px] text-[#252e7b]">
      <colgroup>
        <col className="w-[130px]" />
        <col className="w-[91px]" />
        <col />
      </colgroup>
      <thead>
        <tr className="h-10 bg-[#252e7b] text-[14px] text-gray-200">
          {["TIME", "SUBTYPE"].map((c) => (
            <th key={c} className="p-0 font-normal">
              <div className="flex items-center pr-2">
                <span className="flex-1 text-center">{c}</span>
                <SortButton column={c} />
              </div>
            </th>
          ))}
          <th className="p-0 pl-2 text-left font-normal">LOCATION</th>
        </tr>
      </thead>
      <tbody>
        {rows.map((r, i) => (
          <tr
            key={r.time}
            className={`border-b border-gray-300 ${compact ? "h-[33px]" : "h-[58px]"} ${
              !compact && i === 0 ? "bg-[#87cefa]" : ""
            }`}
          >
            <td className="p-0 text-center whitespace-nowrap">{r.time}</td>
            <td className="p-0 text-center">{r.subtype}</td>
            <td className={`p-0 ${r.pad}`}>{r.location}</td>
          </tr>
        ))}
      </tbody>
    </table>
  );
}

function UseCasesPage() {
  return (
    <div className="flex h-screen flex-col overflow-hidden bg-white">
      <header className="h-[58px] shrink-0 border-b-4 border-[#999cca]">
        <div className="-mr-2.5 flex justify-end pt-px">
          <button type="button" aria-label="Account" className="text-[#90ee90]">
            <MdAccountCircle size={32} />
          </button>
        </div>
      </header>
      <main className="flex min-h-0 flex-1">
        <div className="w-[788px] shrink-0 pl-[2px]">
          <h1 className="pt-8 text-[23px] leading-9 font-bold text-[#252e7b]">-Roads Use Cases</h1>
          <div className="pl-1">
            <h2 className="pt-6 pb-5 text-[19px] leading-8 font-bold text-[#252e7b]">Outgoing</h2>
            <div className="h-[274px]">
              <UseCaseTable compact={false} />
            </div>
            <h2 className="pb-[21px] text-[19px] leading-8 font-bold text-[#252e7b]">Received</h2>
            <UseCaseTable compact />
          </div>
        </div>
        <div className="mt-[92px] ml-[6px] min-w-0 flex-1 border-t border-[#cfe4f2] shadow-[0_3px_5px_#252e7b]">
          <OverviewMap />
        </div>
      </main>
    </div>
  );
}

/* ---------- dialog ---------- */

function Field({
  id,
  label,
  value,
  width,
  active = false,
}: {
  id: string;
  label: string;
  value: string;
  width: string;
  active?: boolean;
}) {
  return (
    <div className={`relative ${width}`}>
      <div className="relative z-10 flex h-6 items-end pl-2">
        <label htmlFor={id} className="border-b border-dotted border-gray-600 text-[15px] leading-6 text-gray-700">
          {label}
        </label>
      </div>
      <div className="relative">
        <input
          id={id}
          defaultValue={value}
          className={`block h-12 w-full rounded-lg border bg-white px-3 pt-0.5 text-[15px] text-[#4fb81f] outline-2 outline-[#52b825] ${
            active ? "border-white ring-1 ring-[#2563eb] outline-offset-2" : "border-[#b5e59f] outline-offset-0"
          }`}
        />
        {active && <span className="absolute top-[14px] left-[151px] h-5 w-px bg-[#4fb81f]" />}
      </div>
    </div>
  );
}

function ScrollRail() {
  return (
    <div className="flex w-[17px] shrink-0 flex-col items-center bg-[#f0f0f0]" aria-hidden="true">
      <svg width="17" height="17" viewBox="0 0 17 17" fill="none" stroke="#505050" strokeWidth="2">
        <path d="M4.500 10L8.500 6L12.500 10" />
      </svg>
      <div className="h-[207px] w-full bg-[#cdcdcd]" />
      <div className="flex-1" />
      <svg width="17" height="17" viewBox="0 0 17 17" fill="none" stroke="#505050" strokeWidth="2">
        <path d="M4.500 7L8.500 11L12.500 7" />
      </svg>
    </div>
  );
}

function EditDialog() {
  return (
    <div
      role="dialog"
      aria-modal="true"
      aria-labelledby="dialog-title"
      className="flex w-full max-w-[772px] overflow-hidden rounded-[3px] bg-white shadow-[0_10px_30px_rgba(0,0,0,0.25)]"
    >
      <div className="min-w-0 flex-1 overflow-hidden px-6 pt-[15px]">
        <h2 id="dialog-title" className="text-[23px] leading-9 font-bold text-black">
          Use case edit
        </h2>
        <div className="flex pt-[11px]">
          <Field id="type" label="Type" value="Roadworks Warning" width="w-[350px]" />
          <Field id="subtype" label="Subtype" value="RWW - Lane Closure" width="w-[350px]" />
        </div>
        <div className="mt-5 bg-[#ee2233]">
          <div className="relative h-96 overflow-hidden rounded-[5px] border border-gray-200 bg-white shadow-[0_3px_5px_#252e7b]">
            <DetailMap />
            <div className="absolute top-[10px] left-[10px] flex flex-col overflow-hidden rounded border-2 border-black/20 bg-white bg-clip-padding text-black">
              <button type="button" aria-label="Zoom in" className="flex h-[30px] w-[30px] items-center justify-center border-b border-gray-300">
                <svg width="14" height="14" viewBox="0 0 14 14" stroke="currentColor" strokeWidth="2">
                  <path d="M1 7H13M7 1V13" />
                </svg>
              </button>
              <button type="button" aria-label="Zoom out" className="flex h-[30px] w-[30px] items-center justify-center">
                <svg width="14" height="14" viewBox="0 0 14 14" stroke="currentColor" strokeWidth="2">
                  <path d="M1 7H13" />
                </svg>
              </button>
            </div>
            <div className="absolute right-0 bottom-0 flex items-center bg-white/80 px-[6px] font-['Liberation_Sans',sans-serif] text-[12px] leading-4 whitespace-pre text-[#333333]">
              <svg width="12" height="8" viewBox="0 0 12 8" className="mr-[3px]">
                <path fill="#4C7BE1" d="M0 0h12v4H0z" />
                <path fill="#FFD500" d="M0 4h12v3H0z" />
                <path fill="#E0BC00" d="M0 7h12v1H0z" />
              </svg>
              <a href="#leaflet" className="text-[#0078A8]">Leaflet</a>
              <span> | Map data © </span>
              <a href="#osm" className="text-[#0078A8]">OpenStreetMap</a>
              <span> contributors</span>
            </div>
          </div>
        </div>
        <h3 className="relative text-[19px] leading-8 font-bold text-[#252e7b]">Time Info</h3>
        <div className="flex gap-2 pt-[2px]">
          <Field id="start-tx" label="Start Tx" value="16. 6. 2022 21:00:00" width="w-48" />
          <Field id="start-event" label="Start event" value="16. 6. 2022 20:41:00" width="w-48" />
          <Field id="end-event" label="End event" value="16. 8. 2022 24:00:00" width="w-48" active />
        </div>
      </div>
      <ScrollRail />
    </div>
  );
}

export default function App() {
  return (
    <div className="relative font-['Open_Sans',sans-serif]">
      <UseCasesPage />
      <div className="fixed inset-0 bg-gray-900/50" />
      <div className="fixed top-[425px] left-[1169px]">
        <RoadworksSigns />
      </div>
      <div className="fixed inset-0 flex justify-center py-4 pl-[18px]">
        <EditDialog />
      </div>
    </div>
  );
}
